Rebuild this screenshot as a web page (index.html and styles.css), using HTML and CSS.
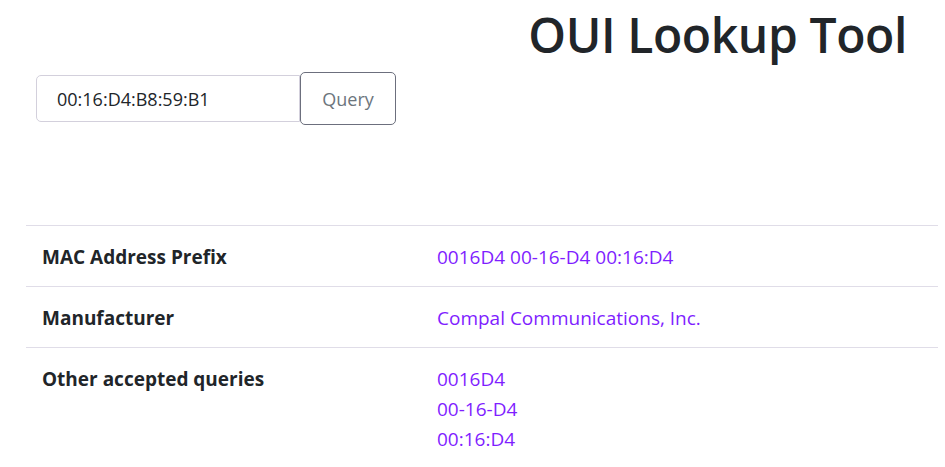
FILE: index.html
```html
<!DOCTYPE html>
<html lang="en">
<head>
<meta charset="utf-8">
<title>OUI Lookup Tool</title>
<link rel="stylesheet" href="styles.css">
</head>
<body>
<div class="page">
  <header class="top">
    <h1 class="title">OUI Lookup Tool</h1>
  </header>
  <form class="query">
    <input class="query-input" type="text" value="00:16:D4:B8:59:B1">
    <button class="query-btn" type="button">Query</button>
  </form>
  <table class="results">
    <tbody>
      <tr>
        <th>MAC Address Prefix</th>
        <td>0016D4 00-16-D4 00:16:D4</td>
      </tr>
      <tr>
        <th>Manufacturer</th>
        <td>Compal Communications, Inc.</td>
      </tr>
      <tr>
        <th>Other accepted queries</th>
        <td><div>0016D4</div><div>00-16-D4</div><div>00:16:D4</div></td>
      </tr>
    </tbody>
  </table>
</div>
</body>
</html>
```
FILE: styles.css
```css
* { box-sizing: border-box; }
html, body { margin: 0; padding: 0; background: #fff; }
body {
  font-family: "Open Sans", "Noto Sans", sans-serif;
  color: #212529;
  font-size: 19px;
}
.page {
  padding: 0 7px 0 26px;
}
.top {
  display: flex;
  justify-content: flex-end;
  padding-right: 31px;
}
.title {
  margin: 5px 0 0;
  font-size: 48px;
  font-weight: 600;
  line-height: 60px;
  letter-spacing: -0.4px;
}
.query {
  display: flex;
  align-items: center;
  margin: 7px 0 0 10px;
}
.query-input {
  width: 264px;
  height: 47px;
  border: 1px solid #d3d0dc;
  border-radius: 5px 0 0 5px;
  padding: 0 20px;
  font-family: inherit;
  font-size: 18px;
  color: #212529;
}
.query-btn {
  width: 96px;
  height: 53px;
  border: 1px solid #6c6f7d;
  border-radius: 5px;
  background: #fff;
  color: #6c757d;
  font-family: inherit;
  font-size: 18px;
}
.results {
  margin-top: 100px;
  width: 912px;
  border-collapse: collapse;
  table-layout: fixed;
}
.results tr {
  border-top: 1px solid #e0dde8;
}
.results th, .results td {
  text-align: left;
  vertical-align: top;
  padding: 16px 16px 14px;
  line-height: 30px;
}
.results th {
  width: 395px;
  font-weight: 700;
  color: #212529;
}
.results td {
  color: #7f1eff;
}
```
